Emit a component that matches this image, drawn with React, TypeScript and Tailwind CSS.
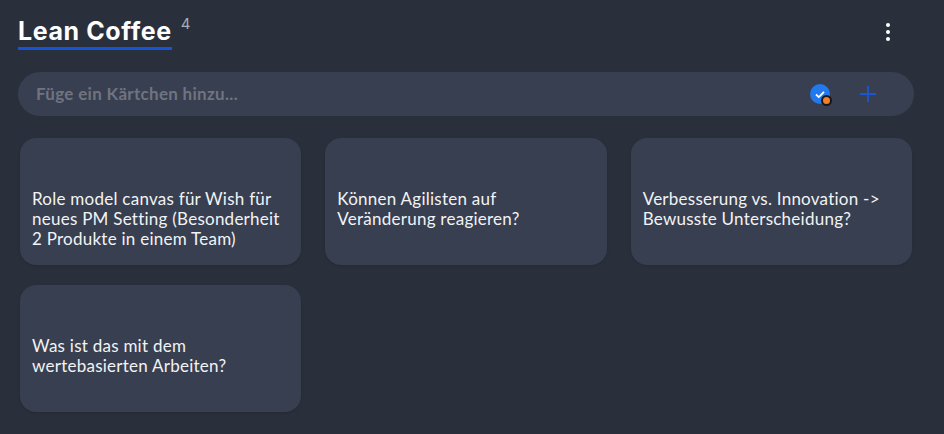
const cards = [
  'Role model canvas für Wish für neues PM Setting (Besonderheit 2 Produkte in einem Team)',
  'Können Agilisten auf Veränderung reagieren?',
  'Verbesserung vs. Innovation -> Bewusste Unterscheidung?',
  'Was ist das mit dem wertebasierten Arbeiten?',
]

export default function App() {
  return (
    <div className="h-[434px] w-[944px] overflow-hidden bg-[#2a303b] font-['Lato',sans-serif]">
      {/* Header */}
      <div className="flex h-[50px] items-start justify-between pl-[18px] pr-[54px] pt-[15px]">
        <div className="flex items-start">
          <h1 className="border-b-[3px] border-[#1553d8] font-['Inter',sans-serif] text-[25px] font-bold leading-[32px] tracking-[0.6px] text-white">
            Lean Coffee
          </h1>
          <span className="ml-[9px] font-['Inter',sans-serif] text-[15px] leading-[18px] text-[#a9adb5]">4</span>
        </div>
        <div className="mt-[8px] flex flex-col gap-[3px]">
          <span className="h-1 w-1 rounded-full bg-white" />
          <span className="h-1 w-1 rounded-full bg-white" />
          <span className="h-1 w-1 rounded-full bg-white" />
        </div>
      </div>

      {/* Add card bar */}
      <div className="ml-[18px] mt-[22px] flex h-11 w-[896px] items-center rounded-[22px] bg-[#383f50] pl-[18px] pr-[37px]">
        <span className="flex-1 text-[17px] font-bold tracking-[0.3px] text-[#6f7480]">Füge ein Kärtchen hinzu...</span>
        <div className="relative mr-[29px] h-5 w-5 rounded-full bg-[#2279ed]">
          <svg viewBox="0 0 20 20" className="h-5 w-5" fill="none" stroke="white" strokeWidth="1.8">
            <path d="M6 10.5l2.8 2.6L14 7.8" />
          </svg>
          <span className="absolute -bottom-[2px] -right-[2px] h-[11px] w-[11px] rounded-full border-2 border-[#15171c] bg-[#f08128]" />
        </div>
        <svg viewBox="0 0 18 18" className="h-[18px] w-[18px]" fill="none" stroke="#1c55d2" strokeWidth="1.8">
          <path d="M9 1v16M1 9h16" />
        </svg>
      </div>

      {/* Cards */}
      <div className="ml-5 mr-8 mt-[22px] grid grid-cols-3 gap-x-6 gap-y-5">
        {cards.map((text) => (
          <div key={text} className="h-[127px] rounded-2xl bg-[#383f50] px-3 pt-[51px] shadow-sm">
            <p className="text-[17px] leading-5 tracking-[0.25px] text-[#f2f3f5]">{text}</p>
          </div>
        ))}
      </div>
    </div>
  )
}
